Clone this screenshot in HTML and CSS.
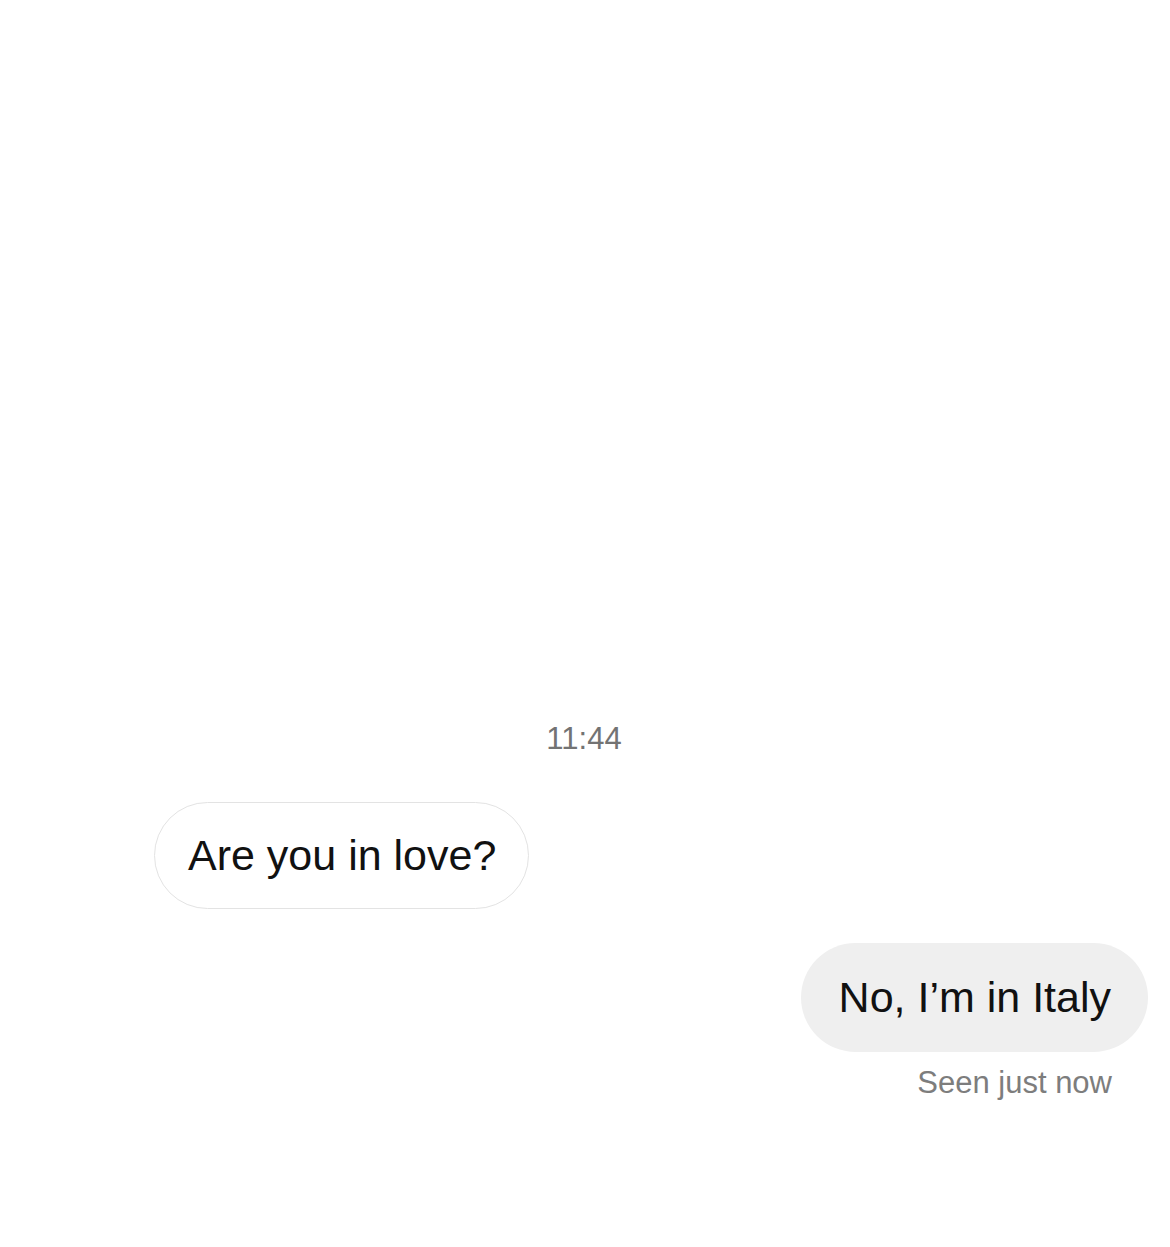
FILE: index.html
```html
<!DOCTYPE html>
<html lang="en">
<head>
    <meta charset="UTF-8">
    <meta name="viewport" content="width=device-width, initial-scale=1.0">
    <title>Chat</title>
    <link rel="stylesheet" href="styles.css">
</head>
<body>
    <div class="chat">
        <div class="timestamp">11:44</div>

        <div class="row row-in">
            <div class="bubble bubble-in">Are you in love?</div>
        </div>

        <div class="row row-out">
            <div class="bubble bubble-out">No, I’m in Italy</div>
        </div>

        <div class="seen">Seen just now</div>
    </div>
</body>
</html>
```

FILE: styles.css
```css
body {
    margin: 0;
    background-color: #ffffff;
    font-family: "Liberation Sans", Arial, sans-serif;
    color: #111;
}
.chat {
    display: flex;
    flex-direction: column;
    padding: 721px 22px 0 154px;
}
.timestamp {
    align-self: center;
    margin-left: -134px;
    font-size: 31px;
    line-height: 36px;
    color: #737373;
}
.row {
    display: flex;
}
.row-in {
    justify-content: flex-start;
    margin-top: 45px;
}
.row-out {
    justify-content: flex-end;
    margin-top: 34px;
}
.bubble {
    font-size: 43px;
    line-height: 49px;
    border-radius: 60px;
    white-space: nowrap;
}
.bubble-in {
    padding: 28px 32px 28px 33px;
    border: 1px solid #e3e3e3;
    background: #ffffff;
}
.bubble-out {
    padding: 30px 37px 30px 38px;
    background: #efefef;
}
.seen {
    align-self: flex-end;
    margin-top: 13px;
    margin-right: 36px;
    font-size: 31px;
    line-height: 36px;
    color: #7d7d7d;
}
```
